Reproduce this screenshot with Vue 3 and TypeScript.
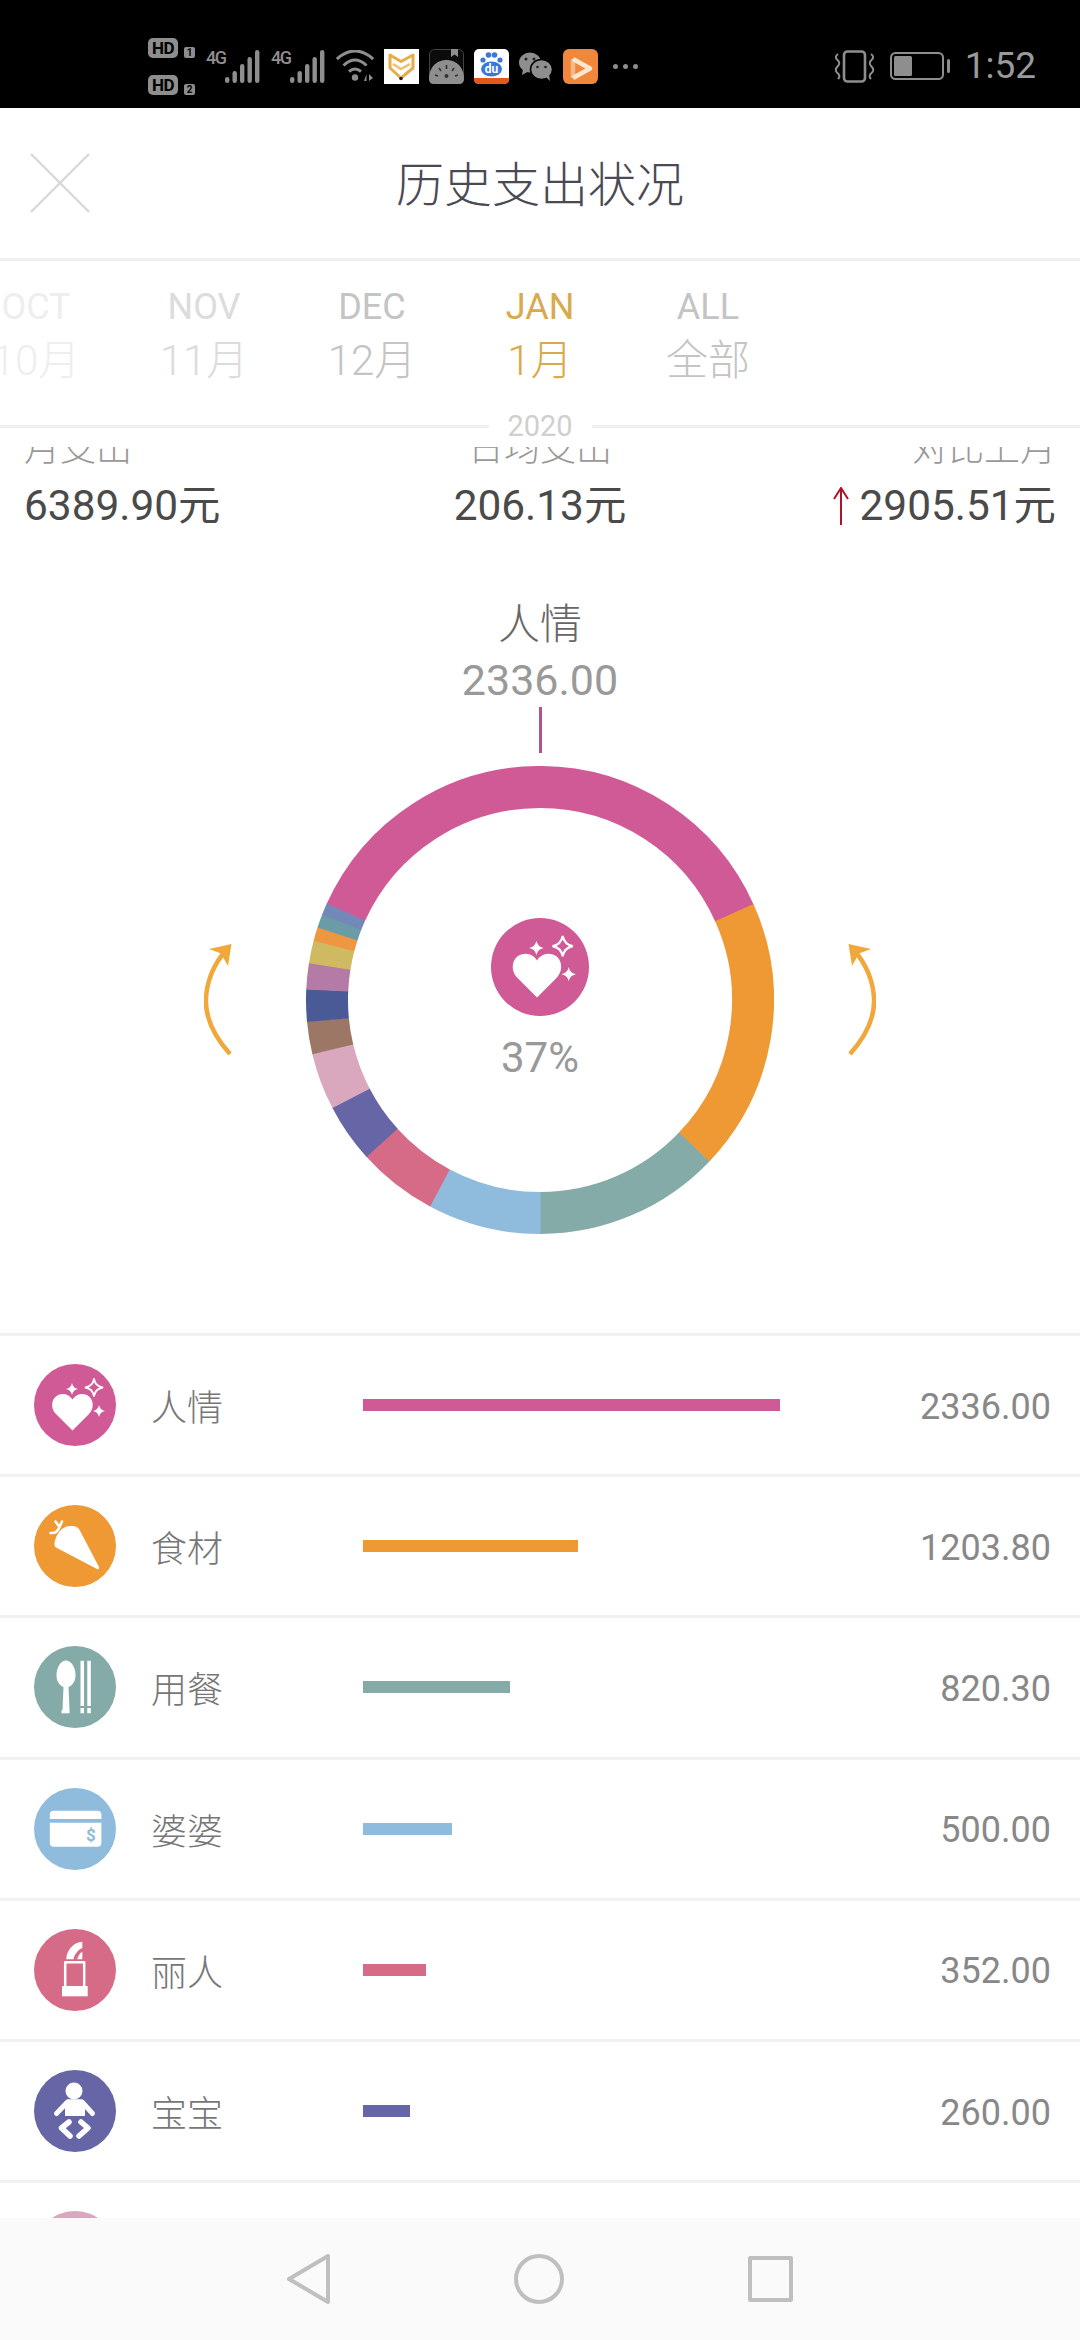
<script setup lang="ts">
type Shape = { d: string; fill?: string; stroke?: string; w?: number }
type IconName = 'heart' | 'carrot' | 'cutlery' | 'card' | 'lipstick' | 'baby' | 'blank'

const months = [
  { en: 'OCT', cn: '10月', cls: 'fade-2' },
  { en: 'NOV', cn: '11月', cls: 'fade-1' },
  { en: 'DEC', cn: '12月', cls: '' },
  { en: 'JAN', cn: '1月', cls: 'active' },
  { en: 'ALL', cn: '全部', cls: '' },
]

const rows: { name: string; amount: number; color: string; icon: IconName }[] = [
  { name: '人情', amount: 2336, color: '#cf5a96', icon: 'heart' },
  { name: '食材', amount: 1203.8, color: '#ef9935', icon: 'carrot' },
  { name: '用餐', amount: 820.3, color: '#85aba9', icon: 'cutlery' },
  { name: '婆婆', amount: 500, color: '#8fbbdc', icon: 'card' },
  { name: '丽人', amount: 352, color: '#d66b88', icon: 'lipstick' },
  { name: '宝宝', amount: 260, color: '#6666a7', icon: 'baby' },
]

// the small categories below the fold only show up in the ring
const slices = [
  ...rows.map((r) => ({ value: r.amount, color: r.color })),
  { value: 250, color: '#d9a7be' },
  { value: 142, color: '#9c7765' },
  { value: 142, color: '#4a5a97' },
  { value: 115, color: '#b47ba6' },
  { value: 100, color: '#cfb961' },
  { value: 60, color: '#ef9640' },
  { value: 57, color: '#6a9ca8' },
  { value: 51.8, color: '#7289b8' },
]

function polar(deg: number, r: number) {
  const rad = ((deg - 90) * Math.PI) / 180
  return `${(234 + r * Math.cos(rad)).toFixed(2)} ${(234 + r * Math.sin(rad)).toFixed(2)}`
}

const total = slices.reduce((s, x) => s + x.value, 0)
let cursor = -(slices[0].value / total) * 180
const arcs = slices.map((s) => {
  const sweep = (s.value / total) * 360
  const from = cursor
  cursor += sweep
  return {
    color: s.color,
    d: `M${polar(from, 213)}A213 213 0 ${sweep > 180 ? 1 : 0} 1 ${polar(cursor + 0.15, 213)}`,
  }
})

function star(x: number, y: number, r: number) {
  const k = r * 0.16
  return `M${x} ${y - r}Q${x + k} ${y - k} ${x + r} ${y}Q${x + k} ${y + k} ${x} ${y + r}Q${x - k} ${y + k} ${x - r} ${y}Q${x - k} ${y - k} ${x} ${y - r}Z`
}

const white = '#fff'
const icons: Record<IconName, Shape[]> = {
  heart: [
    { d: 'M-2.5 25.5L-19 9C-26 2-23-11-12-11C-7.5-11-4.5-8.5-2.5-5.5C-.5-8.5 2.5-11 7-11C18-11 21 2 14 9Z', fill: white },
    { d: star(-3, -16, 6), fill: white },
    { d: star(19, -17.5, 8.5), stroke: white, w: 1.8 },
    { d: star(24, 6, 6), fill: white },
  ],
  carrot: [
    { d: 'M-20.5-3C-19-12-13-20-5-20C0-20.5 3-19 4.6-16L24 21Q24.5 24 22 23L-19 1.5Q-21 0-20.5-3Z', fill: white },
    { d: 'M-24.5-13C-20-12.5-17-15-15.5-19M-15.5-19L-19.5-24.5M-15.5-19L-13-24.5', stroke: white, w: 2.6 },
  ],
  cutlery: [
    { d: 'M-9-26.5C-14-26.5-18.5-20-18.5-12C-18.5-6-16-2-11.5 0L-12.5 23H-5.5L-6.5 0C-2-2 .5-6 .5-12C.5-20-4-26.5-9-26.5Z', fill: white },
    { d: 'M-13.5 23H-5.5V26.3H-13.5Z', fill: white },
    { d: 'M5.5-26.3H9V19H5.5ZM12.3-26.3H15.8V19H12.3ZM5.5 21H9V26.3H5.5ZM12.3 21H15.8V26.3H12.3Z', fill: white },
  ],
  card: [
    { d: 'M-25.2-10V-14.3Q-25.2-18.3-21.2-18.3H22.4Q26.4-18.3 26.4-14.3V-10Z', fill: white },
    { d: 'M-25.2-6.3H26.4V13.7Q26.4 17.7 22.4 17.7H-21.2Q-25.2 17.7-25.2 13.7Z', fill: white },
  ],
  lipstick: [
    { d: 'M-13 16H12.7V26.3H-13Z', fill: white },
    { d: 'M-9.8 16V-7.8H9.2V16', stroke: white, w: 2.5 },
    { d: 'M-8.7-10.7C-8.7-20-1-28 7.3-28.3V-22C3-20-.5-16-1.5-10.7Z', fill: white },
    { d: 'M2.2-10.7C3-14 5-17 7.3-18.5V-10.7Z', fill: white },
  ],
  baby: [
    { d: 'M-9.5-20A8.5 8.5 0 1 0 7.5-20A8.5 8.5 0 1 0-9.5-20Z', fill: white },
    { d: 'M-8-11.7H7.5L10 -7L10 5H-10V-7Z', fill: white },
    { d: 'M-8-8.5L-18.5 2.5M7.5-8.5L17.5 2.5', stroke: white, w: 5 },
    { d: 'M-6 11L-13.5 17L-5 25', stroke: white, w: 5.5 },
    { d: 'M6 11L13 17L4 25', stroke: white, w: 5.5 },
  ],
  blank: [],
}

const signalBars = [
  { x: 0, h: 6 },
  { x: 7.5, h: 12 },
  { x: 15, h: 19 },
  { x: 22.5, h: 26 },
  { x: 30, h: 33 },
]

const fmt = (n: number) => n.toFixed(2)
const barWidth = (n: number) => `${(n * 0.1787).toFixed(1)}px`
</script>

<template>
  <div class="screen">
    <header class="status-bar">
      <div class="hd-col">
        <div v-for="n in 2" :key="n" class="hd-line">
          <span class="hd">HD</span><span class="sim">{{ n }}</span>
        </div>
      </div>
      <div v-for="n in 2" :key="n" class="net">
        <span class="net-label">4G</span>
        <svg width="35" height="33" viewBox="0 0 35 33">
          <rect v-for="b in signalBars" :key="b.x" :x="b.x" :y="33 - b.h" width="4.4" :height="b.h" rx="2.2" fill="#8e8e8e" />
        </svg>
      </div>
      <svg class="wifi" width="38" height="32" viewBox="0 0 38 32" fill="none" stroke="#8e8e8e" stroke-width="3">
        <path d="M.8 9Q19-7 37.2 9M7.5 15.5Q19 4.5 30.5 15.5M13 21.5Q19 16.5 25 21.5" />
        <circle cx="19" cy="27.5" r="3.2" fill="#8e8e8e" stroke="none" />
        <path d="M28 31L30.5 24L30.5 31ZM33 24L37 28L33 31Z" fill="#8e8e8e" stroke="none" />
      </svg>

      <svg class="app" width="35" height="35" viewBox="0 0 35 35">
        <rect width="35" height="35" fill="#fff" />
        <path d="M6 6L17 12.5L29 6V19L17 29L6 19Z" fill="none" stroke="#e6ac48" stroke-width="3" stroke-linejoin="round" />
        <path d="M9 15L17 20L26 15" fill="none" stroke="#eec06c" stroke-width="2.5" />
        <circle cx="17" cy="29.5" r="1.8" fill="#222" />
      </svg>
      <svg class="app" width="35" height="35" viewBox="0 0 35 35">
        <rect x=".5" y=".5" width="34" height="34" rx="5" fill="#0b0b0b" stroke="#444" />
        <path d="M0 30C0 16 10 11 17.5 11C25 11 35 16 35 30Q35 35 30 35H5Q0 35 0 30Z" fill="#8e8e8e" />
        <path d="M22 0H29V8L25.5 5.5L22 8Z" fill="#8e8e8e" />
        <path d="M17.5 16V20M10 19L12 22M25 19L23 22M6 26L9 27M29 26L26 27" stroke="#333" stroke-width="1.6" />
        <circle cx="17.5" cy="27" r="2" fill="#333" />
      </svg>
      <svg class="app" width="35" height="35" viewBox="0 0 35 35">
        <rect width="35" height="35" rx="5" fill="#fff" />
        <path d="M0 29H35V30Q35 35 30 35H5Q0 35 0 30Z" fill="#e2591a" />
        <g fill="#3a78d8">
          <circle cx="9" cy="11" r="2.6" />
          <circle cx="14.5" cy="6" r="2.8" />
          <circle cx="20.5" cy="6" r="2.8" />
          <circle cx="26" cy="11" r="2.6" />
          <ellipse cx="17.5" cy="20" rx="10.5" ry="7.5" />
        </g>
        <text x="17.5" y="24" text-anchor="middle" class="du">du</text>
      </svg>
      <svg class="app wechat" width="34" height="29" viewBox="0 0 34 29">
        <ellipse cx="11" cy="10.5" rx="11" ry="10" fill="#8e8e8e" />
        <path d="M4 17L3 23L10 19Z" fill="#8e8e8e" />
        <ellipse cx="22.5" cy="17.5" rx="11" ry="10" fill="#8e8e8e" stroke="#000" stroke-width="1.5" />
        <path d="M27 25L31 29L30 22Z" fill="#8e8e8e" />
        <g fill="#222">
          <circle cx="7" cy="7" r="1.5" />
          <circle cx="15" cy="7" r="1.5" />
          <circle cx="18.5" cy="15" r="1.3" />
          <circle cx="26.5" cy="15" r="1.3" />
        </g>
      </svg>
      <svg class="app" width="35" height="35" viewBox="0 0 35 35">
        <rect width="35" height="35" rx="6" fill="#f0873a" />
        <path d="M10 10V29" fill="none" stroke="#f6b88a" stroke-width="4.5" />
        <path d="M10 10L27 19.5L10 29" fill="none" stroke="#fbe6d2" stroke-width="4.5" stroke-linejoin="round" />
      </svg>
      <div class="more"><i v-for="n in 3" :key="n"></i></div>

      <div class="status-right">
        <svg width="43" height="33" viewBox="0 0 43 33" fill="none" stroke="#8e8e8e" stroke-width="2.6">
          <rect x="11" y="1.5" width="21" height="30" rx="3.5" />
          <path d="M5 4Q1 7 4.5 10Q8 13 4.5 16.5Q1 20 4.5 23Q8 26 5 29M38 4Q42 7 38.5 10Q35 13 38.5 16.5Q42 20 38.5 23Q35 26 38 29" stroke-width="2" />
        </svg>
        <svg width="61" height="28" viewBox="0 0 61 28">
          <rect x="1" y="1" width="52" height="26" rx="4.5" fill="none" stroke="#8e8e8e" stroke-width="2" />
          <rect x="4" y="4" width="18" height="20" rx="1.5" fill="#8e8e8e" />
          <rect x="57" y="7" width="3" height="14" rx="1.5" fill="#8e8e8e" />
        </svg>
        <span class="clock">1:52</span>
      </div>
    </header>

    <div class="title-bar">
      <svg class="close" width="60" height="60" viewBox="0 0 60 60" stroke="#d8d8d8" stroke-width="2.4">
        <path d="M1 1L59 59M59 1L1 59" />
      </svg>
      <h1 class="title">历史支出状况</h1>
    </div>

    <nav class="months">
      <div v-for="m in months" :key="m.en" class="month" :class="m.cls">
        <span class="month-en">{{ m.en }}</span>
        <span class="month-cn">{{ m.cn }}</span>
      </div>
    </nav>
    <div class="year-row">
      <i></i><span>2020</span><i></i>
    </div>

    <main class="scroll">
      <section class="stats">
        <div class="stat">
          <span class="stat-label">月支出</span>
          <span class="stat-value">6389.90元</span>
        </div>
        <div class="stat center">
          <span class="stat-label">日均支出</span>
          <span class="stat-value">206.13元</span>
        </div>
        <div class="stat end">
          <span class="stat-label">对比上月</span>
          <span class="stat-value">
            <svg class="up" width="18" height="38" viewBox="0 0 18 38" fill="none" stroke="#b0112b" stroke-width="2">
              <path d="M9 38V1M2 12L9 1L16 12" />
            </svg>2905.51元
          </span>
        </div>
      </section>

      <section class="chart">
        <div class="chart-name">人情</div>
        <div class="chart-amount">2336.00</div>
        <div class="tick"></div>
        <div class="ring-row">
          <svg class="turn" width="28" height="112" viewBox="0 0 28 112" fill="none">
            <path d="M26 110C9 91 1 72 2 54C3 36 11 19 22 6" stroke="#f0a83a" stroke-width="4.5" />
            <path d="M27.5 0L5 5L17 9.5L24 22Z" fill="#f0a83a" />
          </svg>
          <div class="ring">
            <svg width="468" height="468" viewBox="0 0 468 468" fill="none">
              <path v-for="a in arcs" :key="a.color" :d="a.d" :stroke="a.color" stroke-width="42" />
            </svg>
            <div class="ring-center">
              <svg class="ring-icon" width="98" height="98" viewBox="-41 -41 82 82">
                <circle r="41" fill="#cf5a96" />
                <path
                  v-for="(s, i) in icons.heart"
                  :key="i"
                  :d="s.d"
                  :fill="s.fill || 'none'"
                  :stroke="s.stroke"
                  :stroke-width="s.w"
                />
              </svg>
              <span class="ring-pct">37%</span>
            </div>
          </div>
          <svg class="turn flip" width="28" height="112" viewBox="0 0 28 112" fill="none">
            <path d="M26 110C9 91 1 72 2 54C3 36 11 19 22 6" stroke="#f0a83a" stroke-width="4.5" />
            <path d="M27.5 0L5 5L17 9.5L24 22Z" fill="#f0a83a" />
          </svg>
        </div>
      </section>

      <section class="list">
        <div v-for="r in rows" :key="r.name" class="row">
          <svg width="82" height="82" viewBox="-41 -41 82 82">
            <circle r="41" :fill="r.color" />
            <path
              v-for="(s, i) in icons[r.icon]"
              :key="i"
              :d="s.d"
              :fill="s.fill || 'none'"
              :stroke="s.stroke"
              :stroke-width="s.w"
              stroke-linecap="round"
              stroke-linejoin="round"
            />
            <text v-if="r.icon === 'card'" x="15.8" y="11.5" text-anchor="middle" class="dollar">$</text>
          </svg>
          <span class="row-name">{{ r.name }}</span>
          <div class="row-track">
            <div class="row-bar" :style="{ width: barWidth(r.amount), background: r.color }"></div>
          </div>
          <span class="row-amount">{{ fmt(r.amount) }}</span>
        </div>
        <div class="row">
          <svg width="82" height="82" viewBox="-41 -41 82 82">
            <circle r="41" fill="#d9a7be" />
          </svg>
        </div>
      </section>
    </main>

    <footer class="nav-bar">
      <svg width="43" height="50" viewBox="0 0 43 50" fill="none" stroke="#bfbfbf" stroke-width="4" stroke-linejoin="round">
        <path d="M41 2V48L2 25Z" />
      </svg>
      <svg width="50" height="50" viewBox="0 0 50 50" fill="none" stroke="#bfbfbf" stroke-width="4">
        <circle cx="25" cy="25" r="23" />
      </svg>
      <svg width="45" height="46" viewBox="0 0 45 46" fill="none" stroke="#bfbfbf" stroke-width="4" stroke-linejoin="round">
        <rect x="2" y="2" width="41" height="42" />
      </svg>
    </footer>
  </div>
</template>

<style>
html,
body {
  margin: 0;
  background: #fff;
}
</style>

<style scoped>
.screen {
  width: 1080px;
  height: 2340px;
  display: flex;
  flex-direction: column;
  overflow: hidden;
  background: #fff;
  font-family: Roboto, "Noto Sans CJK SC", sans-serif;
}

.status-bar {
  flex: none;
  box-sizing: border-box;
  height: 108px;
  padding: 24px 44px 0 148px;
  display: flex;
  align-items: center;
  background: #000;
}

.hd-col {
  display: flex;
  flex-direction: column;
  gap: 17px;
}

.hd-line {
  display: flex;
  align-items: flex-end;
  gap: 6px;
}

.hd {
  width: 30px;
  height: 20px;
  border-radius: 5px;
  background: #8e8e8e;
  color: #000;
  font-size: 17px;
  font-weight: 700;
  line-height: 20px;
  text-align: center;
  letter-spacing: -0.5px;
}

.sim {
  width: 11px;
  height: 11px;
  border-radius: 2px;
  background: #8e8e8e;
  color: #000;
  font-size: 10px;
  font-weight: 700;
  line-height: 11px;
  text-align: center;
}

.net {
  display: flex;
  align-items: flex-start;
  margin-left: 11px;
  height: 33px;
}

.net + .net {
  margin-left: 11px;
}

.net-label {
  width: 19px;
  color: #8e8e8e;
  font-size: 18px;
  font-weight: 500;
  line-height: 16px;
  letter-spacing: -1.4px;
}

.wifi {
  margin-left: 11px;
}

.app {
  margin-left: 10px;
  flex: none;
}

.du {
  fill: #fff;
  font-size: 12px;
  font-weight: 700;
}

.more {
  margin-left: 15px;
  display: flex;
  gap: 5px;
}

.more i {
  width: 5px;
  height: 5px;
  border-radius: 50%;
  background: #8e8e8e;
}

.status-right {
  margin-left: auto;
  display: flex;
  align-items: center;
  gap: 14px;
}

.clock {
  color: #9a9a9a;
  font-size: 37px;
  line-height: 40px;
}

.title-bar {
  flex: none;
  box-sizing: border-box;
  height: 153px;
  display: grid;
  grid-template-columns: 1fr auto 1fr;
  align-items: center;
  border-bottom: 3px solid #f0f0f0;
}

.close {
  margin-left: 30px;
}

.title {
  margin: 0;
  padding-top: 5px;
  color: #4a4a55;
  font-size: 48px;
  font-weight: 300;
  line-height: 60px;
}

.months {
  flex: none;
  box-sizing: border-box;
  height: 144px;
  padding-top: 24px;
  margin-left: -48px;
  display: flex;
}

.month {
  flex: none;
  width: 168px;
  display: flex;
  flex-direction: column;
  align-items: center;
  gap: 7px;
  color: #c4c4c4;
}

.month.fade-1 {
  color: #dcdcdc;
}

.month.fade-2 {
  color: #eeeeee;
}

.month.active {
  color: #d9aa4c;
}

.month-en {
  font-size: 36px;
  line-height: 44px;
}

.month-cn {
  font-size: 42px;
  font-weight: 300;
  line-height: 50px;
}

.year-row {
  flex: none;
  height: 42px;
  display: flex;
  align-items: center;
  color: #cfcfcf;
  font-size: 29px;
}

.year-row i {
  flex: 1;
  height: 3px;
  background: #f0f0f0;
}

.year-row span {
  width: 103px;
  text-align: center;
}

.scroll {
  flex: 1;
  min-height: 0;
  overflow: hidden;
}

.stats {
  margin-top: -18px;
  padding: 0 24px 0 24px;
  display: grid;
  grid-template-columns: repeat(3, 1fr);
}

.stat {
  display: flex;
  flex-direction: column;
  gap: 12px;
}

.stat.center {
  align-items: center;
}

.stat.end {
  align-items: flex-end;
}

.stat-label {
  color: #999;
  font-size: 36px;
  font-weight: 300;
  line-height: 40px;
}

.stat-value {
  display: flex;
  align-items: center;
  color: #4a4a4a;
  font-size: 42.4px;
  line-height: 50px;
  white-space: nowrap;
}

.up {
  margin-right: 9px;
}

.chart {
  padding: 69px 0 99px;
  display: flex;
  flex-direction: column;
  align-items: center;
}

.chart-name {
  color: #666;
  font-size: 42px;
  font-weight: 300;
  line-height: 50px;
}

.chart-amount {
  margin-top: 5px;
  color: #999;
  font-size: 43px;
  line-height: 50px;
}

.tick {
  width: 3px;
  height: 46px;
  margin-top: 2px;
  background: #b0538f;
}

.ring-row {
  margin-top: 13px;
  display: flex;
  align-items: center;
  gap: 74px;
}

.flip {
  transform: scaleX(-1);
}

.ring {
  position: relative;
  width: 468px;
  height: 468px;
}

.ring svg {
  display: block;
}

.ring-center {
  position: absolute;
  inset: 0;
  display: flex;
  flex-direction: column;
  align-items: center;
  justify-content: center;
  gap: 17px;
}

.ring-pct {
  color: #999;
  font-size: 42px;
  line-height: 50px;
}

.row {
  box-sizing: border-box;
  height: 141.2px;
  padding: 0 29px 0 34px;
  display: grid;
  grid-template-columns: 82px 247px 1fr auto;
  align-items: center;
  border-top: 3px solid #f1f1f1;
}

.row svg {
  display: block;
}

.row-name {
  padding-left: 35px;
  color: #777;
  font-size: 36px;
  font-weight: 300;
}

.row-bar {
  height: 12px;
}

.row-amount {
  padding-top: 3px;
  color: #888;
  font-size: 36px;
}

.dollar {
  fill: #8fbbdc;
  font-size: 17px;
  font-weight: 700;
}

.nav-bar {
  flex: none;
  height: 122px;
  display: flex;
  align-items: center;
  justify-content: center;
  gap: 184px;
  background: #fafafa;
}
</style>
